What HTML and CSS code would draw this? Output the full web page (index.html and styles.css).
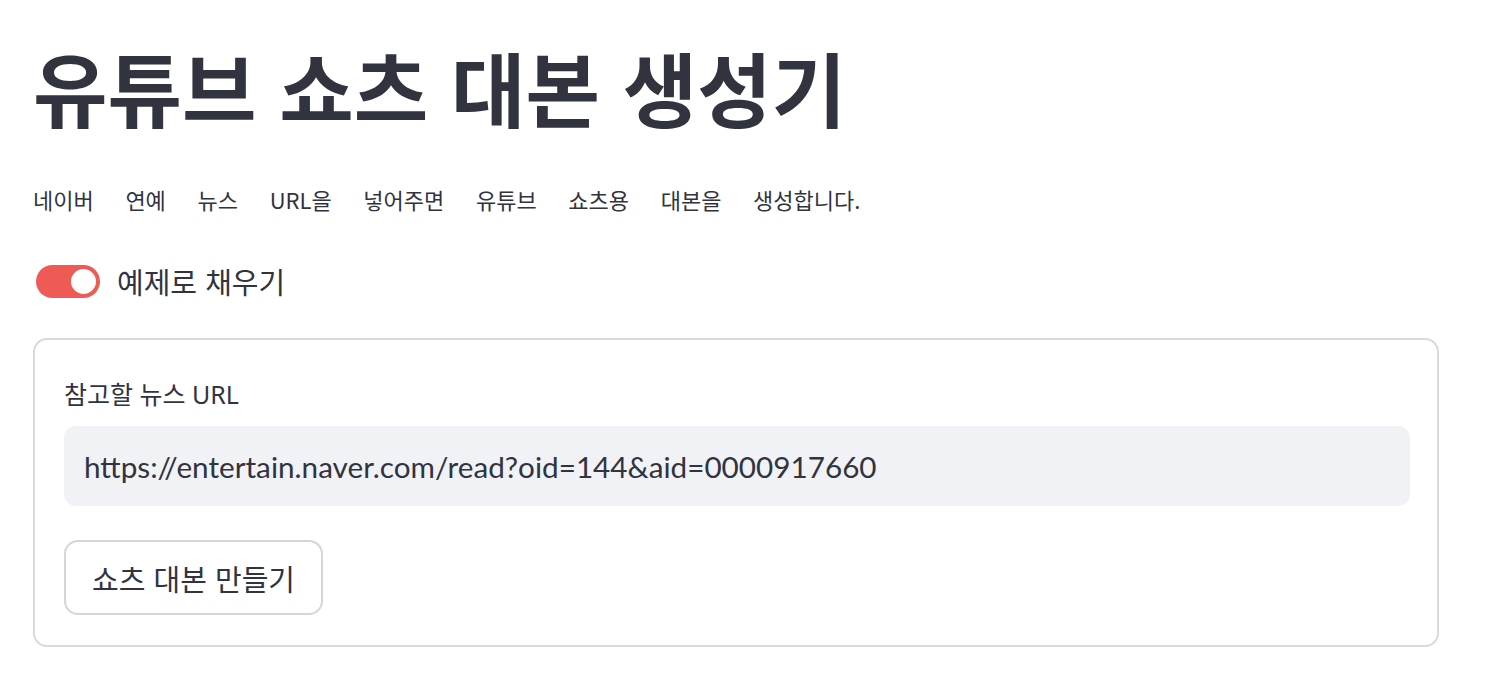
FILE: index.html
```html
<!DOCTYPE html>
<html lang="ko">
<head>
<meta charset="utf-8">
<link rel="stylesheet" href="styles.css">
</head>
<body>
<main class="main">
  <h1 class="title">유튜브 쇼츠 대본 생성기</h1>
  <p class="subtitle">네이버 연예 뉴스 URL을 넣어주면 유튜브 쇼츠용 대본을 생성합니다.</p>
  <label class="toggle">
    <span class="track"><span class="knob"></span></span>
    <span class="toggle-label">예제로 채우기</span>
  </label>
  <form class="form">
    <div class="field-label">참고할 뉴스 URL</div>
    <div class="input">https://entertain.naver.com/read?oid=144&amp;aid=0000917660</div>
    <div class="button-row"><button type="button" class="button">쇼츠 대본 만들기</button></div>
  </form>
</main>
</body>
</html>
```
FILE: styles.css
```css
* { box-sizing: border-box; }
body {
  margin: 0;
  background: #ffffff;
  color: #31333F;
  font-family: "Noto Sans", "Noto Sans CJK KR", sans-serif;
}
.main {
  width: 1406px;
  margin-left: 33px;
  padding-top: 31px;
  display: flex;
  flex-direction: column;
  align-items: flex-start;
}
.title {
  margin: 0;
  font-family: "Noto Sans CJK KR", sans-serif;
  font-size: 81px;
  font-weight: 700;
  line-height: 110px;
  color: #31333F;
}
.subtitle {
  margin: 43px 0 0 0;
  font-family: "Noto Sans CJK KR", sans-serif;
  font-size: 22px;
  line-height: 30px;
  word-spacing: 25.5px;
  color: #31333F;
}
.toggle {
  margin-top: 49px;
  display: flex;
  align-items: center;
  gap: 17px;
  margin-left: 3px;
}
.track {
  width: 64px;
  height: 33px;
  border-radius: 17px;
  background: #EE5A54;
  display: flex;
  align-items: center;
  justify-content: flex-end;
  padding-right: 4px;
}
.knob {
  width: 25px;
  height: 25px;
  border-radius: 50%;
  background: #ffffff;
}
.toggle-label {
  font-family: "Noto Sans CJK KR", sans-serif;
  font-size: 29px;
  line-height: 36px;
}
.form {
  margin-top: 39px;
  width: 1406px;
  border: 2px solid #D9D9DC;
  border-radius: 14px;
  padding: 37px 27px 30px 29px;
  display: flex;
  flex-direction: column;
}
.field-label {
  font-family: "Noto Sans", "Noto Sans CJK KR", sans-serif;
  font-size: 25px;
  line-height: 34px;
}
.input {
  margin-top: 15px;
  height: 80px;
  background: #F0F2F6;
  border-radius: 12px;
  padding: 0 20px;
  display: flex;
  align-items: center;
  font-family: "Lato", "Noto Sans", sans-serif;
  font-size: 29.7px;
  color: #31333F;
}
.button-row { margin-top: 34px; }
.button {
  height: 75px;
  padding: 0 26px;
  background: #ffffff;
  border: 2px solid #D6D6D9;
  border-radius: 14px;
  font-family: "Noto Sans CJK KR", sans-serif;
  font-size: 29px;
  color: #31333F;
}
```
